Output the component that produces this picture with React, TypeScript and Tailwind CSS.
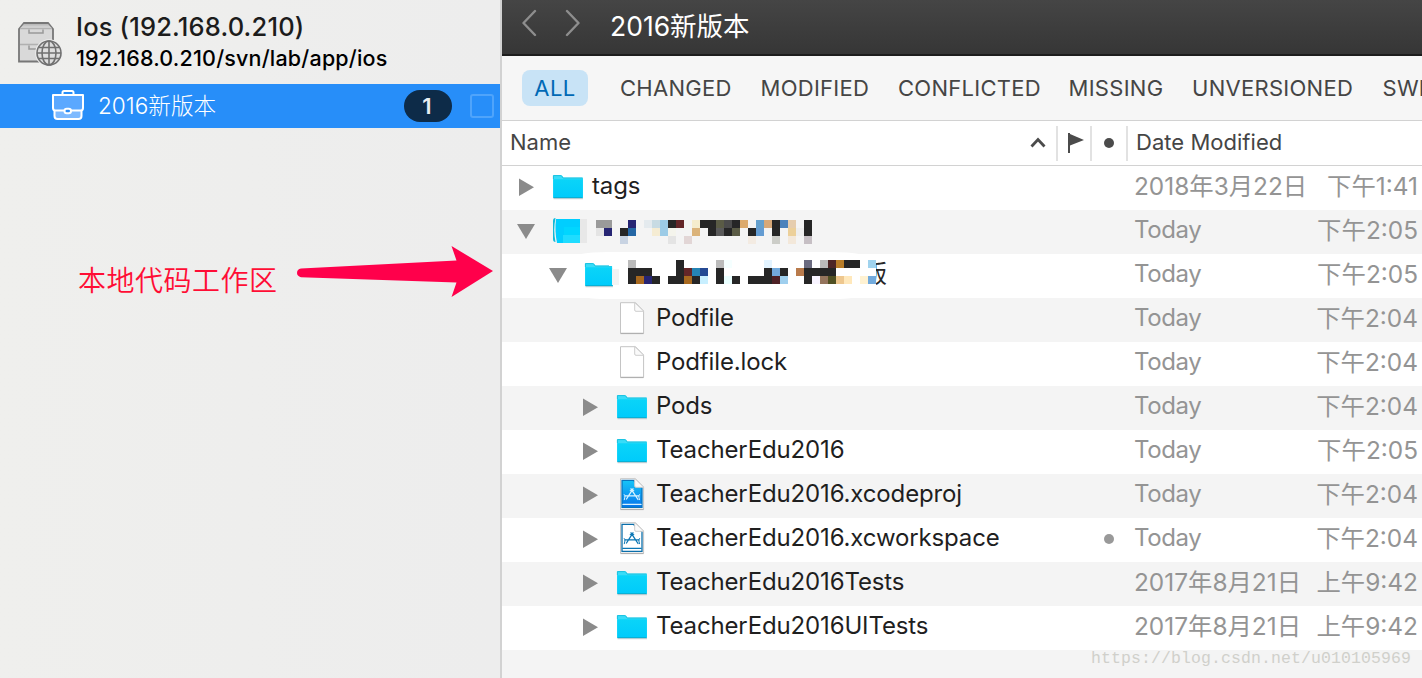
import React from "react";

type IconKind = "folder" | "file" | "project" | "workspace";

interface Entry {
  name: string;
  icon: IconKind;
  indent: string;
  disclosure?: "open" | "closed";
  date: string;
  time: string;
  dot?: boolean;
  censored?: "a" | "b";
}

const entries: Entry[] = [
  { name: "tags", icon: "folder", indent: "pl-4", disclosure: "closed", date: "2018年3月22日", time: "下午1:41" },
  { name: "", icon: "folder", indent: "pl-4", disclosure: "open", date: "Today", time: "下午2:05", censored: "a" },
  { name: "", icon: "folder", indent: "pl-12", disclosure: "open", date: "Today", time: "下午2:05", censored: "b" },
  { name: "Podfile", icon: "file", indent: "pl-20", date: "Today", time: "下午2:04" },
  { name: "Podfile.lock", icon: "file", indent: "pl-20", date: "Today", time: "下午2:04" },
  { name: "Pods", icon: "folder", indent: "pl-20", disclosure: "closed", date: "Today", time: "下午2:04" },
  { name: "TeacherEdu2016", icon: "folder", indent: "pl-20", disclosure: "closed", date: "Today", time: "下午2:05" },
  { name: "TeacherEdu2016.xcodeproj", icon: "project", indent: "pl-20", disclosure: "closed", date: "Today", time: "下午2:04" },
  { name: "TeacherEdu2016.xcworkspace", icon: "workspace", indent: "pl-20", disclosure: "closed", date: "Today", time: "下午2:04", dot: true },
  { name: "TeacherEdu2016Tests", icon: "folder", indent: "pl-20", disclosure: "closed", date: "2017年8月21日", time: "上午9:42" },
  { name: "TeacherEdu2016UITests", icon: "folder", indent: "pl-20", disclosure: "closed", date: "2017年8月21日", time: "上午9:42" },
];

// Pixelated name blocks: [column, row, colour], each cell 8px square.
type Cell = [number, number, string];
const K = "#262626";
const mosaicA: Cell[] = [
  [0, 0, "#9a9a9a"], [1, 0, "#9a9a9a"], [4, 0, "#262573"], [6, 0, "#e4eaee"], [7, 0, "#c8dbe3"], [8, 0, "#9ccbe6"],
  [9, 0, K], [10, 0, "#642628"], [12, 0, "#f5eccd"], [13, 0, K], [14, 0, K], [15, 0, "#5a5b45"], [16, 0, "#4b4b4b"],
  [17, 0, K], [18, 0, "#dcaa6c"], [20, 0, "#64a0ce"], [21, 0, "#d7a878"], [22, 0, K], [23, 0, "#4b82bb"], [24, 0, "#e6cdae"], [26, 0, K],
  [0, 1, "#e4e4e4"], [1, 1, "#262573"], [3, 1, K], [4, 1, "#2567a5"], [7, 1, "#f5ecd3"], [8, 1, "#9ccbe6"], [9, 1, "#f4f4ec"],
  [12, 1, "#dbb37a"], [14, 1, K], [15, 1, "#5a5a5a"], [16, 1, K], [17, 1, "#5a5b45"], [19, 1, K], [20, 1, "#649cd2"],
  [22, 1, K], [24, 1, "#ecd09a"], [25, 1, "#eeeeee"], [26, 1, K],
  [3, 2, "#c8d3e2"], [9, 2, "#e4e4e4"], [11, 2, "#e2d6d6"], [19, 2, "#f3ebe2"], [22, 2, "#cccdc8"], [24, 2, "#f3e8da"], [26, 2, "#c6bfc4"],
];
const mosaicB: Cell[] = [
  [0, 0, "#bbbbbb"], [6, 0, K], [11, 0, "#bbbbbb"], [12, 0, "#f5ffff"], [17, 0, "#e2f3ff"], [22, 0, "#6b6b80"], [24, 0, "#bbbbbb"],
  [25, 0, "#4e2626"], [26, 0, "#b87d29"], [27, 0, K], [28, 0, K], [30, 0, "#a0d3ee"],
  [0, 1, K], [1, 1, K], [2, 1, K], [6, 1, K], [7, 1, "#642628"], [8, 1, "#2584b4"], [9, 1, "#254a94"], [11, 1, K], [17, 1, K],
  [18, 1, "#72aadc"], [19, 1, K], [21, 1, "#b97b4c"], [22, 1, K], [23, 1, K], [24, 1, K], [25, 1, K],
  [0, 2, K], [1, 2, "#a8691f"], [2, 2, "#262573"], [3, 2, K], [5, 2, K], [6, 2, K], [7, 2, "#a8691f"], [8, 2, K], [9, 2, "#c8efff"],
  [11, 2, K], [12, 2, "#eaffff"], [13, 2, K], [15, 2, K], [16, 2, K], [17, 2, K], [18, 2, "#4e2226"], [19, 2, "#9fcfee"], [22, 2, K],
  [23, 2, "#f8f4ff"], [24, 2, "#94745c"], [25, 2, "#505022"], [26, 2, "#eec78e"], [27, 2, "#ffe8bb"], [29, 2, "#fff2d2"], [30, 2, "#72aadc"],
];

function Mosaic({ cells, columns }: { cells: Cell[]; columns: number }) {
  return (
    <svg width={columns * 8} height={24} className="block shrink-0" shapeRendering="crispEdges">
      {cells.map(([c, r, fill]) => (
        <rect key={`${c}-${r}`} x={c * 8} y={r * 8} width={8} height={8} fill={fill} />
      ))}
    </svg>
  );
}

function Folder({ cut }: { cut?: "a" | "b" }) {
  if (cut === "a") {
    return (
      <svg width="36" height="28" viewBox="0 0 36 28">
        <path d="M3.5 2 Q1 2 1 5 V23 Q1 26 3.5 26 Q1 14 3.5 2Z" fill="#10b9d8" />
        <rect x="28" y="3" width="7" height="24" fill="#e8e8e8" />
        <path d="M4 3 H28 V27 H5 Q2.5 15 4 3Z" fill="#00ceff" />
        <path d="M12 11h16v8H12z" fill="#00d6ff" />
        <path d="M11 19h17v8H11z" fill="#1fdcff" />
      </svg>
    );
  }
  return (
    <svg width="36" height="28" viewBox="0 -1 36 28">
      <defs>
        <linearGradient id="folderFill" x1="0" y1="0" x2="0" y2="1">
          <stop offset="0" stopColor="#0ad4f8" />
          <stop offset="1" stopColor="#00cbfb" />
        </linearGradient>
      </defs>
      <path d="M1.5 25.7H31" stroke="#b9c6c9" strokeWidth="1" />
      <path d="M1 24V3.2Q1 2 2.2 2H8.6Q9.6 2 10.4 3L11.4 4.4H30Q31 4.4 31 5.4V24Q31 25 30 25H2Q1 25 1 24Z" fill="#39dcf8" />
      <path d="M1.3 6.3H30.8V24.2Q30.8 24.8 30.2 24.8H1.8Q1.3 24.8 1.3 24.2Z" fill="url(#folderFill)" />
      <path d="M1.4 6V2.6H8.7Q9.4 2.6 10 3.5L11.2 5.1H30.6" fill="none" stroke="#17bedd" strokeWidth=".9" />
      <path d="M1.5 24.6H30.5" stroke="#08aed2" strokeWidth="1" />
      {cut === "b" && <path d="M25 0H36V5H25zM28 4H36V27H29z" fill="#fff" />}
      {cut === "b" && <rect x="28" y="8" width="7" height="16" fill="#f3f3f3" />}
    </svg>
  );
}

function Page({ kind }: { kind: IconKind }) {
  const project = kind === "project";
  const ink = project ? "#d8f3ff" : "#0a76b4";
  return (
    <svg width="36" height="34" viewBox="0 0 36 34">
      <defs>
        <linearGradient id="projectFill" x1="0" y1="0" x2="0" y2="1">
          <stop offset="0" stopColor="#16c4f7" />
          <stop offset="1" stopColor="#0776ec" />
        </linearGradient>
      </defs>
      <path d="M4.5 1.7H19.5L27.6 10V32.2H4.5Z" fill="#fff" stroke="#c4c4c4" strokeWidth="1" />
      <path d="M4.5 32.6H27.6" stroke="#adadad" strokeWidth="1" />
      {kind !== "file" && (
        <path
          d="M6 3.4H17.5L26 10.8V30.3H6Z"
          fill={project ? "url(#projectFill)" : "#fff"}
          stroke={project ? "#0875be" : "#0a6eaa"}
          strokeWidth="1.3"
        />
      )}
      {kind !== "file" && (
        <g fill="none" stroke={ink} strokeWidth="1.3" strokeLinecap="round">
          <path d="M15 11.8L22 22.5M17 11.8L10.5 22M9 18.8H23" />
          <path d="M14.2 13.6h3.6M8.3 17.5q1 1 .6 2.6l-.6 2.6M23.5 17.5q-1 1-.6 2.6l.6 2.6" strokeWidth="1" />
          <path d="M7 27.4H25" strokeWidth="1.4" />
        </g>
      )}
      <path d="M18.7 1.5L27.8 10.3H20Q18.7 10.3 18.7 9Z" fill="#fafafa" stroke="#cdcdcd" strokeWidth="1" />
    </svg>
  );
}

function Triangle({ state }: { state?: "open" | "closed" }) {
  return (
    <svg width="20" height="20" viewBox="0 0 20 20" className="-ml-0.5 shrink-0">
      {state === "closed" && <path d="M3 2.5L18 11.3L3 20Z" fill="#8b8b8b" />}
      {state === "open" && <path d="M1 4H19L10 19Z" fill="#8b8b8b" />}
    </svg>
  );
}

function EntryRow({ entry }: { entry: Entry }) {
  const wordDate = entry.date === "Today";
  return (
    <li className="flex h-11 shrink-0 items-center odd:bg-white even:bg-[#f4f4f4]">
      <div className={`relative flex h-11 w-[596px] shrink-0 items-center pb-1 ${entry.indent}`}>
        {entry.censored === "b" && (
          <span className="absolute -top-0.5 left-[66px] h-[47px] w-[304px] rounded-[40px/8px] bg-white" />
        )}
        <span className="relative flex h-10 w-[34px] shrink-0 items-center pb-px">
          <Triangle state={entry.disclosure} />
        </span>
        <span className="relative flex w-[40px] shrink-0 items-center">
          {entry.icon === "folder" ? <Folder cut={entry.censored} /> : <Page kind={entry.icon} />}
        </span>
        {entry.censored === "a" && (
          <span className="relative ml-1 block pt-1">
            <Mosaic cells={mosaicA} columns={27} />
          </span>
        )}
        {entry.censored === "b" && (
          <span className="relative ml-1 flex items-center pb-1">
            <Mosaic cells={mosaicB} columns={31} />
            <span className="-mb-1 flex w-[11px] justify-end overflow-hidden text-[24px] leading-[30px] text-[#262626]">版</span>
          </span>
        )}
        {!entry.censored && (
          <span className="text-[24px] leading-[30px] tracking-[-0.14px] whitespace-nowrap text-[#1f1f1f]">{entry.name}</span>
        )}
      </div>
      <div className="flex w-[36px] shrink-0 justify-start pb-0.5 pl-px">
        {entry.dot && <span className="ml-[5px] size-[10px] rounded-full bg-[#999]" />}
      </div>
      <div className="flex w-[284px] shrink-0 items-center justify-between pb-1 leading-[30px] whitespace-nowrap text-[#949494]">
        <span className={wordDate ? "text-[24px] tracking-[-0.4px]" : "text-[24.4px]"}>{entry.date}</span>
        <span className="text-[24.4px]">{entry.time}</span>
      </div>
    </li>
  );
}

function Cabinet() {
  return (
    <svg width="46" height="46" viewBox="0 0 46 46" className="shrink-0">
      <defs>
        <linearGradient id="cabinetTop" x1="0" y1="0" x2="0" y2="1">
          <stop offset="0" stopColor="#b5b5b5" />
          <stop offset="1" stopColor="#e2e2e2" />
        </linearGradient>
      </defs>
      <path d="M1 8L6 2H30L35 8V40.5H1Z" fill="#d9d9d9" stroke="#777" strokeWidth="1.8" />
      <path d="M2 7.5L6 3H30L34 7.5Z" fill="url(#cabinetTop)" />
      <path d="M2 7.5H34M2 23.5H34" stroke="#b1b1b1" strokeWidth="1.5" />
      <path d="M11 8.5V12H25V8.5M11 24.5V28H25V24.5" fill="none" stroke="#999" strokeWidth="1.5" />
      <circle cx="31" cy="32" r="13.8" fill="#ededed" />
      <g fill="none" stroke="#707070" strokeWidth="1.6">
        <circle cx="31" cy="32" r="12" fill="#dedede" />
        <ellipse cx="31" cy="32" rx="7" ry="12" />
        <path d="M31 20V44M19 32H43M20.5 26.5H41.5M20.5 37.5H41.5" />
      </g>
    </svg>
  );
}

function Briefcase() {
  return (
    <svg width="34" height="32" viewBox="0 0 34 32" className="shrink-0">
      <g stroke="#fff" strokeWidth="2" strokeLinejoin="round">
        <path d="M3.5 19V26Q3.5 29 6.5 29H27.5Q30.5 29 30.5 26V19Z" fill="#7ebaff" />
        <path d="M2 5H32V18Q32 20.5 29.5 20.5H4.5Q2 20.5 2 18Z" fill="#5ba8ff" />
        <path d="M11.5 5V2.5Q11.5 1 13 1H21Q22.5 1 22.5 2.5V5" fill="none" />
        <rect x="13.5" y="18.7" width="6.5" height="4.6" rx="2.3" fill="#2d8cf5" />
      </g>
    </svg>
  );
}

const filters = [
  { label: "CHANGED", box: "w-[140.5px]" },
  { label: "MODIFIED", box: "w-[137.5px]" },
  { label: "CONFLICTED", box: "w-[170.5px]" },
  { label: "MISSING", box: "w-[123.5px]" },
  { label: "UNVERSIONED", box: "w-[190.5px]" },
  { label: "SWITCHED", box: "w-[140px]" },
];

function Sidebar() {
  return (
    <aside className="flex w-[500px] shrink-0 flex-col bg-linear-to-r from-[#efefed] to-[#ededed]">
      <header className="flex h-[84px] shrink-0 pt-[21px] pl-[18px]">
        <Cabinet />
        <div className="-mt-[10px] ml-[12px] flex flex-col whitespace-nowrap">
          <h1 className="text-[25.5px] leading-[32px] font-medium tracking-[0.18px] text-[#1c1c1c]">Ios (192.168.0.210)</h1>
          <p className="text-[21.5px] leading-[31px] font-medium tracking-[0.19px] text-black">192.168.0.210/svn/lab/app/ios</p>
        </div>
      </header>
      <div className="flex h-11 shrink-0 items-center bg-[#278ef9] pr-[6px] pl-[51px]">
        <Briefcase />
        <span className="ml-[13px] text-[22.6px] leading-[30px] font-light whitespace-nowrap text-white">2016新版本</span>
        <span className="ml-auto flex h-8 w-12 items-center justify-center rounded-full bg-[#0d2b48] pr-0.5 text-[22px] font-semibold text-[#e8edf2]">1</span>
        <span className="ml-[18px] size-6 rounded-[3px] border-2 border-[#4fa4fb]" />
      </div>
      <div className="flex pt-[115px] pl-[78px]">
        <span className="mt-[18px] w-[219px] text-[28px] leading-[40px] font-[350] tracking-[0.5px] whitespace-nowrap text-[#ff0d35]">本地代码工作区</span>
        <svg width="197" height="54" viewBox="0 0 197 54" className="shrink-0">
          <path d="M4 25.5L159.5 17.5L154.5 3L196 28L154.5 54L159.5 39.5L4 34.3Q0 33 0 30Q0 26 4 25.5Z" fill="#ff004b" />
        </svg>
      </div>
    </aside>
  );
}

export default function App() {
  return (
    <div className="flex h-[678px] w-[1422px] overflow-hidden bg-white font-[Inter,'Noto_Sans_CJK_SC',sans-serif]">
      <Sidebar />
      <main className="relative flex w-[922px] shrink-0 flex-col overflow-hidden border-l-2 border-[#d2d2d2]">
        <header className="flex h-14 shrink-0 border-b-2 border-[#1d1d1d] bg-linear-to-b from-[#454545] to-[#363636] pt-[9px] pl-5">
          <svg width="60" height="28" viewBox="0 0 60 28" fill="none" stroke="#8e8e8e" strokeWidth="2.4" strokeLinecap="round" strokeLinejoin="round">
            <path d="M13 2L1.5 14L13 26M45 2L56.5 14L45 26" />
          </svg>
          <h2 className="ml-[28px] text-[26.5px] leading-[34px] whitespace-nowrap text-white">2016新版本</h2>
        </header>
        <nav className="flex h-[65px] shrink-0 items-center border-b border-[#d2d2d2] bg-[#f6f6f6] pl-5 text-[22px] whitespace-nowrap text-[#454545]">
          <span className="flex h-9 w-[66px] shrink-0 items-center justify-center rounded-lg bg-[#c8e3f6] tracking-[0.5px] text-[#0069b5]">ALL</span>
          <div className="ml-[32px] flex tracking-[0.28px]">
            {filters.map((f) => (
              <span key={f.label} className={`shrink-0 ${f.box}`}>{f.label}</span>
            ))}
          </div>
        </nav>
        <div className="flex h-[45px] shrink-0 items-center border-b border-[#d2d2d2] text-[22px] whitespace-nowrap text-[#454545]">
          <div className="flex h-[35px] w-[556px] shrink-0 items-center justify-between border-r-2 border-[#e2e2e2] pr-[10px] pl-[8px]">
            <span className="pb-0.5">Name</span>
            <svg width="16" height="12" viewBox="0 0 16 12" fill="none" stroke="#4b4b4b" strokeWidth="2.8">
              <path d="M1.5 9.5L8 2.5L14.5 9.5" />
            </svg>
          </div>
          <div className="flex h-[35px] w-[34px] shrink-0 items-center justify-center border-r-2 border-[#e2e2e2] pb-px pl-1">
            <svg width="16" height="20" viewBox="0 0 16 20" fill="#4b4b4b">
              <path d="M0 0H2V1L16 7L2 12.5V20H0Z" />
            </svg>
          </div>
          <div className="flex h-[35px] w-9 shrink-0 items-center justify-center border-r-2 border-[#e2e2e2]">
            <span className="size-[10px] rounded-full bg-[#4b4b4b]" />
          </div>
          <span className="ml-2 pb-0.5 tracking-[0.03px]">Date Modified</span>
        </div>
        <ul className="flex h-[512px] shrink-0 flex-col bg-[#f4f4f4]">
          {entries.map((entry, i) => (
            <EntryRow key={i} entry={entry} />
          ))}
        </ul>
        <span className="absolute right-[11px] bottom-[8px] font-['Liberation_Mono',monospace] text-[16.5px] leading-[22px] tracking-[0.1px] whitespace-nowrap text-[#d0d0cb]">
          https://blog.csdn.net/u010105969
        </span>
      </main>
    </div>
  );
}
